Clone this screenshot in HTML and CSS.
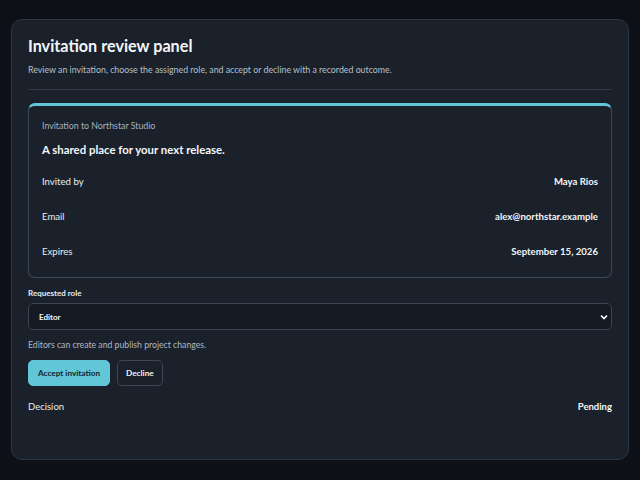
FILE: index.html
```html
<!DOCTYPE html>
<html>
<head>
<meta charset="utf-8">
<title>Invitation review panel</title>
<link rel="stylesheet" href="styles.css">
</head>
<body>
<div class="panel">
  <h1 class="panel__title">Invitation review panel</h1>
  <p class="panel__lead">Review an invitation, choose the assigned role, and accept or decline with a recorded outcome.</p>
  <hr class="panel__rule">

  <div class="invite">
    <div class="invite__eyebrow">Invitation to Northstar Studio</div>
    <div class="invite__headline">A shared place for your next release.</div>
    <div class="invite__rows">
      <div class="invite__row"><span>Invited by</span><b>Maya Rios</b></div>
      <div class="invite__row"><span>Email</span><b>alex@northstar.example</b></div>
      <div class="invite__row"><span>Expires</span><b>September 15, 2026</b></div>
    </div>
  </div>

  <label class="field__label" for="role">Requested role</label>
  <div class="field__select">
    <select id="role">
      <option>Editor</option>
      <option>Viewer</option>
      <option>Admin</option>
    </select>
    <svg class="field__chevron" width="8" height="6" viewBox="0 0 8 6"><path d="M1 1.5l3 3 3-3" fill="none" stroke="#fff" stroke-width="1.6"/></svg>
  </div>
  <p class="field__help">Editors can create and publish project changes.</p>

  <div class="actions">
    <button class="btn btn--primary">Accept invitation</button>
    <button class="btn">Decline</button>
  </div>

  <div class="decision"><span>Decision</span><b>Pending</b></div>
</div>
</body>
</html>
```

FILE: styles.css
```css
*,
*::before,
*::after {
  box-sizing: border-box;
}

body {
  margin: 0;
  padding: 19px 11px 20px;
  background: #0d1016;
  font-family: Lato, "Noto Sans", sans-serif;
  color: #e8edf2;
}

.panel {
  height: 441px;
  padding: 15px 16px;
  background: #1a212a;
  border: 1px solid #2c3540;
  border-radius: 11px;
}

.panel__title {
  margin: 0;
  font-size: 16.2px;
  font-weight: 700;
  line-height: 22px;
  color: #f3f6f9;
}

.panel__lead {
  margin: 6px 0 0;
  font-size: 8.8px;
  line-height: 14px;
  color: #b6c0cb;
}

.panel__rule {
  margin: 12px 0 13px;
  border: 0;
  border-top: 1px solid #303a45;
}

.invite {
  padding: 13px 13px 8px;
  border: 1px solid #3d4a56;
  border-top: 3px solid #62c6d9;
  border-radius: 7px;
}

.invite__eyebrow {
  font-size: 8.8px;
  line-height: 14px;
  color: #a8b3be;
}

.invite__headline {
  margin-top: 8px;
  font-size: 11.4px;
  font-weight: 700;
  line-height: 18px;
  color: #f3f6f9;
}

.invite__rows {
  margin-top: 5px;
}

.invite__row {
  display: flex;
  justify-content: space-between;
  align-items: center;
  height: 35px;
  font-size: 9.6px;
}

.invite__row b,
.decision b {
  font-weight: 700;
  color: #f3f6f9;
}

.field__label {
  display: block;
  margin-top: 9px;
  font-size: 8px;
  font-weight: 700;
  line-height: 12px;
}

.field__select {
  position: relative;
  margin-top: 4px;
}

.field__select select {
  display: block;
  width: 100%;
  height: 27px;
  padding: 0 10px;
  appearance: none;
  background: #131a22;
  border: 1px solid #3b4652;
  border-radius: 5px;
  color: #f3f6f9;
  font-family: inherit;
  font-size: 8px;
  font-weight: 700;
}

.field__chevron {
  position: absolute;
  right: 4px;
  top: 11px;
}

.field__help {
  margin: 8px 0 0;
  font-size: 8.7px;
  line-height: 14px;
  color: #aeb9c4;
}

.actions {
  display: flex;
  gap: 7px;
  margin-top: 8px;
}

.btn {
  height: 26px;
  padding: 0 8px;
  background: transparent;
  border: 1px solid #3d4854;
  border-radius: 5px;
  color: #eef2f5;
  font-family: inherit;
  font-size: 8.2px;
  font-weight: 700;
}

.btn--primary {
  padding: 0 9px;
  background: #62c6d9;
  border-color: #62c6d9;
  color: #10232b;
}

.decision {
  display: flex;
  justify-content: space-between;
  align-items: center;
  margin-top: 13px;
  font-size: 9.5px;
  line-height: 16px;
}
```
